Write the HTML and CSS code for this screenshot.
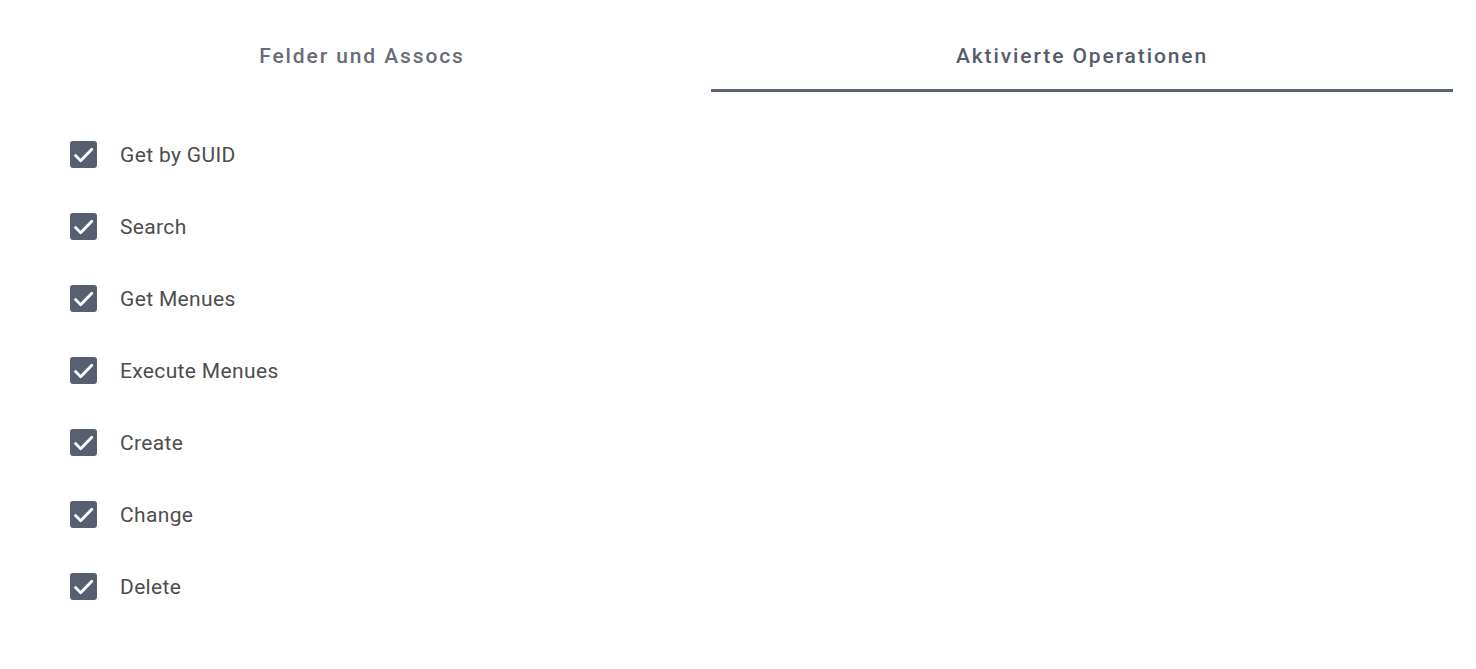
FILE: index.html
```html
<!DOCTYPE html>
<html lang="de">
<head>
<meta charset="utf-8">
<link rel="stylesheet" href="styles.css">
</head>
<body>
<div class="tabs">
  <div class="tab tab-left">Felder und Assocs</div>
  <div class="tab tab-active">Aktivierte Operationen</div>
</div>
<ul class="list">
  <li class="item"><span class="box"><svg viewBox="0 0 27 27"><path d="M5.5 14.5L10.7 19.8L21.8 8.3" fill="none" stroke="#fff" stroke-width="2.8" stroke-linecap="round" stroke-linejoin="round"/></svg></span><span class="label">Get by GUID</span></li>
  <li class="item"><span class="box"><svg viewBox="0 0 27 27"><path d="M5.5 14.5L10.7 19.8L21.8 8.3" fill="none" stroke="#fff" stroke-width="2.8" stroke-linecap="round" stroke-linejoin="round"/></svg></span><span class="label">Search</span></li>
  <li class="item"><span class="box"><svg viewBox="0 0 27 27"><path d="M5.5 14.5L10.7 19.8L21.8 8.3" fill="none" stroke="#fff" stroke-width="2.8" stroke-linecap="round" stroke-linejoin="round"/></svg></span><span class="label">Get Menues</span></li>
  <li class="item"><span class="box"><svg viewBox="0 0 27 27"><path d="M5.5 14.5L10.7 19.8L21.8 8.3" fill="none" stroke="#fff" stroke-width="2.8" stroke-linecap="round" stroke-linejoin="round"/></svg></span><span class="label">Execute Menues</span></li>
  <li class="item"><span class="box"><svg viewBox="0 0 27 27"><path d="M5.5 14.5L10.7 19.8L21.8 8.3" fill="none" stroke="#fff" stroke-width="2.8" stroke-linecap="round" stroke-linejoin="round"/></svg></span><span class="label">Create</span></li>
  <li class="item"><span class="box"><svg viewBox="0 0 27 27"><path d="M5.5 14.5L10.7 19.8L21.8 8.3" fill="none" stroke="#fff" stroke-width="2.8" stroke-linecap="round" stroke-linejoin="round"/></svg></span><span class="label">Change</span></li>
  <li class="item"><span class="box"><svg viewBox="0 0 27 27"><path d="M5.5 14.5L10.7 19.8L21.8 8.3" fill="none" stroke="#fff" stroke-width="2.8" stroke-linecap="round" stroke-linejoin="round"/></svg></span><span class="label">Delete</span></li>
</ul>
</body>
</html>
```
FILE: styles.css
```css
html, body {
  margin: 0;
  padding: 0;
  background: #ffffff;
  font-family: Roboto, "Noto Sans", sans-serif;
}
.tabs {
  display: flex;
  margin-left: 13px;
  width: 1440px;
}
.tab {
  height: 92px;
  box-sizing: border-box;
  display: flex;
  align-items: flex-start;
  justify-content: center;
  padding-top: 44px;
  font-size: 21px;
  line-height: 24px;
  font-weight: 500;
  letter-spacing: 1.9px;
  color: #686c76;
}
.tab-left {
  width: 698px;
}
.tab-active {
  width: 742px;
  color: #555c6a;
  border-bottom: 3px solid #5a6373;
}
.list {
  list-style: none;
  margin: 0;
  padding: 49px 0 0 70px;
  display: flex;
  flex-direction: column;
  gap: 45px;
}
.item {
  display: flex;
  align-items: center;
  height: 27px;
}
.box {
  width: 27px;
  height: 27px;
  border-radius: 3px;
  background: #575f71;
  display: block;
  flex: none;
}
.box svg {
  display: block;
  width: 27px;
  height: 27px;
}
.label {
  margin-left: 23px;
  font-size: 21px;
  letter-spacing: 0.35px;
  color: #4d4d4d;
}
```
